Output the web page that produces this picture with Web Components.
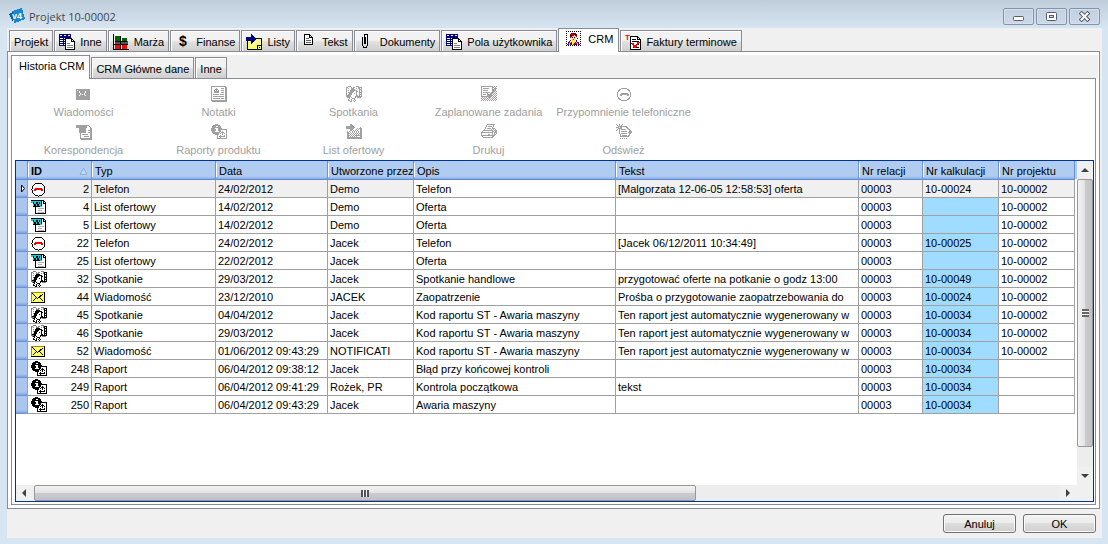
<!DOCTYPE html>
<html lang="pl">
<head>
<meta charset="utf-8">
<title>Projekt 10-00002</title>
<style>
  html, body { margin: 0; height: 100%; }
  body { font: 11px/14px "Liberation Sans", Arial, sans-serif; color: #000; background: #d7e4f2; }
</style>
</head>
<body>
<project-window></project-window>

<script>
/* ---------- icons ---------- */
const COLORS = { k: '#000', g: '#808080', l: '#c0c0c0', w: '#fff', y: '#ffff00', c: '#00d8e8', n: '#000080', r: '#ff0000', m: '#800020', p: '#f8a8d8', s: '#fcd0a0', v: '#700070', a: '#a0a0a0' };

/* turns rows of colour letters into runs of one-pixel-high rectangles */
function pixels(rows, colors = COLORS) {
  let out = '';
  rows.forEach((row, y) => {
    for (let x = 0; x < row.length;) {
      let end = x;
      while (end < row.length && row[end] === row[x]) end++;
      if (colors[row[x]]) out += `<rect x="${x}" y="${y}" width="${end - x}" height="1" fill="${colors[row[x]]}"/>`;
      x = end;
    }
  });
  return out;
}

const FACE = [
  '..ggg.....ggg...',
  'ggwwwg.ggwwwgkkk',
  'gwgwwgggwwgwgkwk',
  'gwwwwkkkkwwwwkkk',
  'gwgwkkkkkkkwwkwk',
  'gwwwkkkkwwkkwkck',
  'gwgkkkkwwwkwwkkk',
  'gwwkkkwwkwkwwkwk',
  'gwgkkkwwwwkwwkkk',
  'gkkkkwwwwwkkwkyk',
  'gggkkwwwwkkkkkkk',
  '.gkkwkwwwkwgggg.',
  '...kwwkkkww.....',
  '..k..kwwk.......',
  '..kk.kwk.k......',
  '....kk..k.......'];
const REPORT = [
  '....kkk.........',
  '..kkkkkkk.......',
  '.kkkkwwkkk......',
  '.kkkkkkkkk......',
  'kkkkwwwkkkk.....',
  'kkkkkwwkkkkkkkkk',
  'kkkkkwwkkkwwwwwk',
  '.kkkwwwwkkwkwwwk',
  '.kkkkkkkkwkkkwwk',
  '..kkkkkkwkwkwkwk',
  '....kkkkwwwkwwwk',
  '......kwwkwwwkwk',
  '......kwkkkkkkwk',
  '......kwwkwwwwwk',
  '......kkkkkkkkkk',
  '................'];
const NOTES = [
  'kkkkkkkkkkkkkkk.',
  'kwwwwwwwwwwwwwkk',
  'kwwwwkwwwwkkkwkk',
  'kwwwkkkwwwwwwwkk',
  'kwwkwkwkwwkkkwkk',
  'kwwkkkkkwwwwwwkk',
  'kwwkkkkkwwkkkwkk',
  'kwwwwwwwwwwwwwkk',
  'kwkkkkkkwkkkkwkk',
  'kwwwwwwwwwwwwwkk',
  'kwkkkkkkkkkkkwkk',
  'kwwwwwwwwwwwwwkk',
  'kwkkkkkkkwkkkwkk',
  'kwwwwwwwwwwwwwkk',
  'kkkkkkkkkkkkkkkk',
  '.kkkkkkkkkkkkkkk'];
const TASKS = [
  'kkkkkkkkkkkk.k.k',
  'kwwwwwwwwwwkk.k.',
  'kwkkkkkkwwwk.kkk',
  'kwwwwwwwwwwkkkk.',
  'kwkkkkkwwwwkkkk.',
  'kwwwwwwwwwwkkk.k',
  'kwkkkkkkkwkkk.k.',
  'kwwwwwkwwkkk.k.k',
  'kwkkkwkkkkk.k.k.',
  'kwwwwwkkkkkk.k.k',
  'kkkkkkkkkkk.k.k.',
  '.k.k.k.kkk.k.k.k',
  'k.k.k.k.k.k.k.k.',
  '.k.k.k.k.k.k.k.k',
  'k.k.k.k.k.k.k.k.'];
const PRINTER = [
  '......kkkkkkkk..',
  '.....kwwwwwwk...',
  '.....kwkkkkwk...',
  '....kwwwwwwk....',
  '....kwkkkkwkkk..',
  '...kwwwwwwk.k.k.',
  '..kkkkkkkkkk.kkk',
  '.kwwwwwwwwwkk.kk',
  'kkkkkkkkkkkkwkkk',
  'kwwwwwwwwwwkwk.k',
  'kwwwwwwkkwwkwkk.',
  'kkkkkkkkkkkkkk..',
  '.kwwwwwwwwwkk...',
  '..kkkkkkkkkk....'];
const REFRESH = [
  'k..k..k.........',
  '.k.k.k..........',
  '..kkkkkkkkk.....',
  'kkkwkkwwwwkk....',
  '..kkkkwwwwwkk...',
  '.k.k.kkkkkwwkk..',
  'k..kwwwwwwwwwkk.',
  '...kwkkkkkkwwkkk',
  '...kwwwwwwwwkkkk',
  '...kwkkkkkkwwkk.',
  '....kwwwwwwwwk..',
  '....kwkkkkkwkk..',
  '....kkkkkkkkk...',
  '................',
  '....k.k.k.k.....'];
const LETTER_IN = [
  '....kk..........',
  '....kkk.........',
  'kkkkkkkk........',
  'kkkkkkkkk.....k.',
  'kkkkkkkk...k.kkk',
  '....kkk...k.k.kk',
  '....kk.k.k.kwwkk',
  '.k.k..k.k.k.k.kk',
  '.kk.k.k.k.k.k.kk',
  '.kkk.k.k.k.k.kkk',
  '.kk.k.k.k.k.k.kk',
  '.kkk.k.k.kkkkkkk',
  '.kk.k.k.k.kwwwkk',
  '.kkkkkkkkkkkkkkk',
  '.kkkkkkkkkkkkkkk'];
const PERSON = [
  'k.k.k.k.k.k.k.k',
  '...............',
  'k....mmmmm....k',
  '....mmrmmmm....',
  'k...mmmmsmm...k',
  '....mkssssm....',
  'k...mskskss...k',
  '.....sssss.k...',
  'k....ssrss....k',
  '....m.sss.k....',
  'k..v..yyy.v...k',
  '..vvpvysyvpvv..',
  'k.vpvvyyvvvpv.k',
  '.vvpvvyvvvvpvv.',
  'k.k.k.k.k.k.k.k'];
const GREY = { k: '#a0a0a0', w: '#fff' };

const sheet = (x, y, w, h) =>
  `<path d="M${x + .5} ${y + .5}h${w - 4}l3 3v${h - 4}h-${w - 1}z" fill="#fff" stroke="#000"/><path d="M${x + w - 3.5} ${y + .5}v3h3" fill="none" stroke="#000"/>`;

const ICONS = {
  logo: `<path d="M3 3L13 0L16 11L5 15.500z" fill="#1787cf"/><path d="M0 6L4 4V14z" fill="#0a5ca0"/><text x="3" y="11" font-size="9" font-weight="bold" fill="#fff" font-family="Liberation Sans">v4</text>`,
  table: `<path d="M0 0h12v3h-12z" fill="#000080"/><path d="M1 1h2v1h-2zM5 1h2v1h-2zM9 1h2v1h-2z" fill="#fff"/><path d="M0 3h12v9h-12z" fill="#000080"/><path d="M1 4h3v1h-3zM5 4h3v1h-3zM9 4h2v1h-2zM1 6h3v1h-3zM5 6h3v1h-3zM1 8h3v1h-3zM1 10h3v1h-3zM5 8h1v1h-1zM5 10h1v1h-1z" fill="#fff"/>` + sheet(6, 4, 10, 12) + `<path d="M8 9h3v1h-3zM8 11h6v1h-6zM8 13h6v1h-6z" fill="#808080"/>`,
  bars: `<path d="M0 0h1v15h15v1h-16z"/><path d="M2 2h5v5h-5zM9 4h5v3h-5z" fill="#006400"/><path d="M2 7h13v4h-13z" fill="#555"/><path d="M2 7h12v1h-12zM7 2h1v13h-1zM1 10h14v1h-14z"/><path d="M2 11h5v4h-5zM9 11h5v4h-5z" fill="#f00"/>`,
  dollar: `<text x="4" y="12" font-size="14" font-weight="bold" font-family="Liberation Sans">$</text>`,
  note: `<path d="M2 5h13v10h-13z" fill="#ffff60"/><path d="M4 13L13 6" stroke="#fff"/><path d="M1 7h1v9h-1zM1 15h15v1h-15zM15 4h1v12h-1zM8 4h8v1h-8z"/><path d="M11 11h4v1h-4zM11 11h1v4h-1zM13 13h1v1h-1z"/><path d="M0 3h5v-3l5 5l-5 5v-3h-5z" fill="#000080"/>`,
  page: sheet(3, 0, 9, 11) + `<path d="M5 4h3v1h-3zM5 6h5v1h-5zM5 8h5v1h-5z" fill="#606060"/>`,
  clip: `<path d="M3.500 3v8l1 2h3l1-2v-10l-1-1h-1l-1 1v9M6.500 10v-7" fill="none" stroke="#000"/>`,
  person: pixels(PERSON),
  terms: sheet(5, 2, 11, 14) + `<path d="M7 5h4v1h-4zM7 7h7v1h-7zM7 9h2v1h-2zM12 10h2v1h-2zM8 13h6v1h-6z"/><path d="M7 9l3 4l4-5" fill="none" stroke="#f00" stroke-width="2"/><text x="0" y="6" font-size="8" font-weight="bold" fill="#f00" font-family="Liberation Sans">T</text>`,
  phone: `<circle cx="7.500" cy="8.500" r="6.500" fill="#fff" stroke="#000"/><path d="M3 10v-2h1v-1h7v1h1v2h-2v-1h-5v1z" fill="#f00"/>`,
  word: `<path d="M4.500 1.500h8l2 2v11h-10z" fill="#fff" stroke="#000"/><path d="M12 1v3h3" fill="none" stroke="#000"/><path d="M7 9h6v1h-6zM7 11h4v1h-4zM7 13h6v1h-6z" fill="#b0b0b0"/><path d="M0 1h11v7h-9v-4h-2z" fill="#00d8e0"/><path d="M0 1h11v1h-11zM10 1h1v6h-1zM2 7h7v1h-7z"/><path d="M2 3l2 4l2-4l1 4l2-4" fill="none" stroke="#000"/>`,
  mail: `<path d="M0 3h14v11h-14z"/><path d="M0 3h13v10h-13z" fill="#a08c00"/><path d="M1 4h12v9h-12z" fill="#ffff66"/><path d="M1.500 4.500l5 5l6-5M1.500 12.500l4-4M12.500 12.500l-4-4" fill="none" stroke="#000"/>`,
  face: pixels(FACE),
  report: pixels(REPORT),
  'g-mail': `<path d="M0 3h14v11h-14z" fill="#a0a0a0"/><path d="M1.500 4.500l5 4l5-4M1.500 11.500l3-3M11.500 11.500l-3-3" fill="none" stroke="#fff" stroke-dasharray="1 1"/>`,
  'g-notes': pixels(NOTES, GREY),
  'g-face': pixels(FACE, { k: '#a0a0a0', g: '#a0a0a0', w: '#fff', y: '#fff', c: '#fff' }),
  'g-tasks': pixels(TASKS, GREY),
  'g-phone': `<circle cx="8" cy="8.500" r="6.500" fill="#fff" stroke="#a0a0a0"/><path d="M4 10v-2h1v-1h7v1h1v2h-2v-1h-5v1z" fill="#a0a0a0"/>`,
  'g-word': `<path d="M4.500 1.500h8l2 2v11h-10z" fill="#fff" stroke="#a0a0a0"/><path d="M12 1v3h4v12h-11v-1h9v-11h-2zM0 1h11v3h-1v5h-7v-5h-3zM6 10h6v1h-6zM8 12h5v1h-5zM12 6h2v1h-2zM12 8h2v1h-2z" fill="#a0a0a0"/>`,
  'g-report': pixels(REPORT, GREY),
  'g-letter': pixels(LETTER_IN, GREY),
  'g-printer': pixels(PRINTER, GREY),
  'g-refresh': pixels(REFRESH, GREY)
};

const define = (name, html, setup) => {
  const template = document.createElement('template');
  template.innerHTML = html;
  customElements.define(name, class extends HTMLElement {
    constructor() {
      super();
      this.attachShadow({ mode: 'open' }).append(template.content.cloneNode(true));
    }
    connectedCallback() { if (setup) setup(this, this.shadowRoot); }
  });
};

define('ui-icon', `<style>:host { display: block; flex: none; width: 16px; height: 16px } svg { display: block; overflow: visible }</style><svg width="16" height="16" viewBox="0 0 16 16" shape-rendering="crispEdges" aria-hidden="true"></svg>`,
  (el, root) => { root.querySelector('svg').innerHTML = ICONS[el.getAttribute('name')]; });

/* ---------- title bar ---------- */
define('title-bar', `
<style>
  :host { display: flex; align-items: center; height: 28px; padding: 0 8px 0 9px; background: linear-gradient(#bfccd9, #d7e4f2); }
  h1 { flex: 1; margin: 0; padding: 6px 4px 0; font: 11px/16px "Open Sans", "Noto Sans", sans-serif; color: #404850; }
  ui-icon { margin-top: 4px; }
  .controls { display: flex; gap: 2px; padding-top: 4px; }
  button { display: flex; align-items: center; justify-content: center; width: 31px; height: 17px; padding: 0; background: linear-gradient(#c3d0df, #cbd9e8); border: 1px solid #8393b0; border-radius: 2px; box-shadow: inset 0 0 0 1px #d5e0ec; }
</style>
<ui-icon name="logo"></ui-icon>
<h1><slot></slot></h1>
<div class="controls">
  <button aria-label="Minimalizuj"><svg width="12" height="12"><rect x="0.500" y="6.500" width="10" height="4" rx="1" fill="#fff" stroke="#565c68"/></svg></button>
  <button aria-label="Maksymalizuj"><svg width="12" height="12"><rect x="0.500" y="2.500" width="10" height="8" rx="1" fill="#fff" stroke="#565c68"/><rect x="3.500" y="5.500" width="4" height="2" fill="#ccd8e6" stroke="#565c68"/></svg></button>
  <button aria-label="Zamknij"><svg width="12" height="12"><path d="M2.500 3.500L8.500 9.500M8.500 3.500L2.500 9.500" stroke="#565c68" stroke-width="4" stroke-linecap="square"/><path d="M2.500 3.500L8.500 9.500M8.500 3.500L2.500 9.500" stroke="#fff" stroke-width="2" stroke-linecap="square"/></svg></button>
</div>`);

/* ---------- tabs ---------- */
define('tab-strip', `<style>:host { display: flex; align-items: flex-end; gap: 1px; padding-left: 2px; position: relative } :host([level="2"]) { padding-left: 3px; margin-top: 3px; background: #f0f0f0; }</style><slot></slot>`,
  (el) => el.setAttribute('role', 'tablist'));

define('tab-item', `
<style>
  :host { display: block; }
  button { display: flex; align-items: center; gap: 5px; height: 21px; padding: 2px 4px 0; font: inherit; color: inherit; white-space: nowrap; background: linear-gradient(#f2f2f2 0 45%, #e0e0e0 55%, #cfcfcf); border: 1px solid #898c95; border-bottom: 0; box-shadow: inset 1px 1px #fff; }
  button.on { height: 24px; margin-bottom: -1px; padding: 0 5px 3px 7px; gap: 6px; background: #fff; position: relative; }
</style>
<button role="tab"><slot name="icon"></slot><span><slot></slot></span></button>`,
  (el, root) => {
    const on = el.hasAttribute('selected');
    const button = root.querySelector('button');
    button.classList.toggle('on', on);
    button.setAttribute('aria-selected', on);
  });

/* ---------- tool bar ---------- */
define('tool-bar', `<style>:host { display: grid; grid-template-columns: repeat(5, 135px); padding: 5px 0 0 4px; height: 76px; align-content: start; box-sizing: content-box; height: 76px; }</style><slot></slot>`);
define('tool-button', `
<style>
  button { display: flex; flex-direction: column; align-items: center; gap: 3px; width: 100%; height: 38px; padding: 2px 0 0; border: 0; background: none; font: inherit; color: #a0a0a0; white-space: nowrap; }
  :host { display: block; }
</style>
<button disabled><ui-icon></ui-icon><span><slot></slot></span></button>`,
  (el, root) => {
    const icon = document.createElement('ui-icon');
    icon.setAttribute('name', el.getAttribute('icon'));
    root.querySelector('ui-icon').replaceWith(icon);
  });

/* ---------- scroll bar ---------- */
define('scroll-bar', `
<style>
  :host { display: flex; background: #ededed; }
  :host([vertical]) { flex-direction: column; width: 16px; }
  :host(:not([vertical])) { height: 16px; }
  button { flex: none; width: 18px; height: 16px; padding: 0; border: 0; background: #f0f0f0; display: flex; align-items: center; justify-content: center; }
  :host([vertical]) button { width: 16px; height: 18px; }
  .track { flex: 1; display: flex; }
  :host([vertical]) .track { flex-direction: column; }
  .thumb { flex: none; width: 64.6%; display: flex; align-items: center; justify-content: center; box-sizing: border-box; border: 1px solid #979797; border-radius: 2px; background: linear-gradient(#f4f4f4, #e2e2e4 50%, #cccdd1 50%, #c0c0c6); }
  :host([vertical]) .thumb { width: auto; height: 93%; background: linear-gradient(90deg, #f4f4f4, #e2e2e4 50%, #cccdd1 50%, #c0c0c6); }
  .grip { width: 8px; height: 7px; background: repeating-linear-gradient(90deg, #555 0 2px, #f4f4f4 2px 3px); }
  :host([vertical]) .grip { width: 7px; height: 8px; background: repeating-linear-gradient(#666 0 2px, #f4f4f4 2px 3px); }
</style>
<button class="back"></button><div class="track"><div class="thumb"><div class="grip"></div></div></div><button class="next"></button>`,
  (el, root) => {
    const vertical = el.hasAttribute('vertical');
    const arrow = d => `<svg width="8" height="8"><path d="${d}" fill="#404040"/></svg>`;
    const [back, next] = root.querySelectorAll('button');
    back.setAttribute('aria-label', vertical ? 'W górę' : 'W lewo');
    next.setAttribute('aria-label', vertical ? 'W dół' : 'W prawo');
    back.innerHTML = arrow(vertical ? 'M0 6L4 2L8 6z' : 'M5 0L1 4L5 8z');
    next.innerHTML = arrow(vertical ? 'M0 2L4 6L8 2z' : 'M2 0L6 4L2 8z');
  });

/* ---------- data grid ---------- */
const ROWS = [
  ['phone', '2', 'Telefon', '24/02/2012', 'Demo', 'Telefon', '[Malgorzata 12-06-05 12:58:53] oferta', '00003', '10-00024', '10-00002'],
  ['word', '4', 'List ofertowy', '14/02/2012', 'Demo', 'Oferta', '', '00003', '', '10-00002'],
  ['word', '5', 'List ofertowy', '14/02/2012', 'Demo', 'Oferta', '', '00003', '', '10-00002'],
  ['phone', '22', 'Telefon', '24/02/2012', 'Jacek', 'Telefon', '[Jacek 06/12/2011 10:34:49]', '00003', '10-00025', '10-00002'],
  ['word', '25', 'List ofertowy', '22/02/2012', 'Jacek', 'Oferta', '', '00003', '', '10-00002'],
  ['face', '32', 'Spotkanie', '29/03/2012', 'Jacek', 'Spotkanie handlowe', 'przygotować oferte na potkanie o godz 13:00', '00003', '10-00049', '10-00002'],
  ['mail', '44', 'Wiadomość', '23/12/2010', 'JACEK', 'Zaopatrzenie', 'Prośba o przygotowanie zaopatrzebowania do', '00003', '10-00024', '10-00002'],
  ['face', '45', 'Spotkanie', '04/04/2012', 'Jacek', 'Kod raportu ST - Awaria maszyny', 'Ten raport jest automatycznie wygenerowany w', '00003', '10-00034', '10-00002'],
  ['face', '46', 'Spotkanie', '29/03/2012', 'Jacek', 'Kod raportu ST - Awaria maszyny', 'Ten raport jest automatycznie wygenerowany w', '00003', '10-00034', '10-00002'],
  ['mail', '52', 'Wiadomość', '01/06/2012 09:43:29', 'NOTIFICATI', 'Kod raportu ST - Awaria maszyny', 'Ten raport jest automatycznie wygenerowany w', '00003', '10-00034', '10-00002'],
  ['report', '248', 'Raport', '06/04/2012 09:38:12', 'Jacek', 'Błąd przy końcowej kontroli', '', '00003', '10-00034', ''],
  ['report', '249', 'Raport', '06/04/2012 09:41:29', 'Rożek, PR', 'Kontrola początkowa', 'tekst', '00003', '10-00034', ''],
  ['report', '250', 'Raport', '06/04/2012 09:43:29', 'Jacek', 'Awaria maszyny', '', '00003', '10-00034', '']
];

define('history-grid', `
<style>
  :host { display: flex; flex-direction: column; border: 1px solid #003399; background: #fff; }
  .main { flex: 1; display: flex; }
  .sheet { flex: 1; padding-right: 2px; background: linear-gradient(#b0ccf0, #adc9ef) 0 0 / 100% 18px no-repeat; }
  table { width: 100%; table-layout: fixed; border-collapse: separate; border-spacing: 0; }
  th, td { box-sizing: border-box; height: 18px; padding: 1px 2px 0; line-height: 14px; text-align: left; white-space: nowrap; overflow: hidden; border-right: 1px solid #a0a0a0; border-bottom: 1px solid #a0a0a0; }
  th { height: 19px; padding: 2px 0 0 3px; font-weight: normal; border-right: 1px solid #6b93d6; border-bottom: 1px solid #5f8ad6; background: linear-gradient(#fff, #fff) 0 2px / 1px 14px no-repeat, linear-gradient(#b0ccf0 0 15px, #9dbcec 17px, #7ba2e2); }
  th:first-child { background: linear-gradient(#b0ccf0 0 15px, #7ba2e2); }
  th.id { padding-right: 3px; font-weight: bold; }
  .split { display: flex; align-items: center; justify-content: space-between; }
  td.id { padding: 0 2px 0 3px; }
  td.id .split { height: 17px; }
  .mark { padding: 0 0 0 4px; background: linear-gradient(#aac6ee 0 14px, #7ba2e2); border-bottom-color: #6b93d6; }
  .mark svg { display: block; }
  tr.current td:not(.mark) { background: #f0f0f0; }
  tr.current td.focus { background: #fff; }
  .calc { background: #a0dcff; }
  .foot { display: flex; }
  .foot scroll-bar { flex: 1; }
  .corner { width: 16px; background: #f0f0f0; }
</style>
<div class="main">
  <div class="sheet">
    <table>
      <colgroup><col style="width:12px"><col style="width:64px"><col style="width:124px"><col style="width:112px"><col style="width:86px"><col style="width:202px"><col><col style="width:64px"><col style="width:76px"><col style="width:76px"></colgroup>
      <thead><tr><th></th><th class="id"><span class="split">ID<svg width="9" height="9" aria-hidden="true"><path d="M1 7.500L4.500 1L8 7.500z" fill="#c4d8f6" stroke="#88aee4"/></svg></span></th><th>Typ</th><th>Data</th><th>Utworzone przez</th><th>Opis</th><th>Tekst</th><th>Nr relacji</th><th>Nr kalkulacji</th><th>Nr projektu</th></tr></thead>
      <tbody></tbody>
    </table>
  </div>
  <scroll-bar vertical></scroll-bar>
</div>
<div class="foot"><scroll-bar></scroll-bar><div class="corner"></div></div>`,
  (el, root) => {
    root.querySelector('tbody').innerHTML = ROWS.map(([icon, id, ...cells], i) => {
      const mark = i ? '' : '<svg width="6" height="9"><path d="M1.500 1L4.500 4.500L1.500 8z" fill="#fff" stroke="#000"/></svg>';
      const rest = cells.map((text, n) => `<td class="${n === 3 ? 'focus' : n === 6 ? 'calc' : ''}">${text}</td>`).join('');
      return `<tr class="${i ? '' : 'current'}"><td class="mark">${mark}</td><td class="id"><span class="split"><ui-icon name="${icon}"></ui-icon>${id}</span></td>${rest}</tr>`;
    }).join('');
  });

define('push-button', `
<style>
  :host { display: block; }
  button { width: 73px; height: 19px; padding: 0; font: inherit; color: inherit; border: 1px solid #707070; border-radius: 3px; background: linear-gradient(#f3f3f3, #ebebeb 50%, #dddddd 50%, #cfcfcf); box-shadow: inset 0 0 0 1px #fafafa; display: flex; align-items: center; justify-content: center; }
</style>
<button><slot></slot></button>`);

/* ---------- window ---------- */
define('project-window', `
<style>
  :host { display: flex; flex-direction: column; min-height: 100vh; box-sizing: border-box; padding: 0 6px 6px 7px; background: #d7e4f2; }
  title-bar { margin: 0 -6px 0 -7px; }
  main { flex: 1; display: flex; flex-direction: column; background: #f0f0f0; }
  main > tab-strip { height: 23px; }
  .page { flex: 1; display: flex; flex-direction: column; margin-right: 2px; border: 1px solid #898c95; background: #fff; }
  .page > tab-strip { height: 23px; margin-right: 1px; }
  .panel { flex: 1; display: flex; flex-direction: column; margin: 0 3px 3px; border: 1px solid #898c95; }
  history-grid { flex: 1; margin: 0 1px 2px 3px; }
  footer { display: flex; justify-content: flex-end; gap: 7px; padding: 5px 6px 5px; }
</style>
<title-bar>Projekt 10-00002</title-bar>
<main>
  <tab-strip>
    <tab-item>Projekt</tab-item>
    <tab-item><ui-icon slot="icon" name="table"></ui-icon>Inne</tab-item>
    <tab-item><ui-icon slot="icon" name="bars"></ui-icon>Marża</tab-item>
    <tab-item><ui-icon slot="icon" name="dollar"></ui-icon>Finanse</tab-item>
    <tab-item><ui-icon slot="icon" name="note"></ui-icon>Listy</tab-item>
    <tab-item><ui-icon slot="icon" name="page"></ui-icon>Tekst</tab-item>
    <tab-item><ui-icon slot="icon" name="clip"></ui-icon>Dokumenty</tab-item>
    <tab-item><ui-icon slot="icon" name="table"></ui-icon>Pola użytkownika</tab-item>
    <tab-item selected><ui-icon slot="icon" name="person"></ui-icon>CRM</tab-item>
    <tab-item><ui-icon slot="icon" name="terms"></ui-icon>Faktury terminowe</tab-item>
  </tab-strip>
  <div class="page">
    <tab-strip level="2">
      <tab-item selected>Historia CRM</tab-item>
      <tab-item>CRM Główne dane</tab-item>
      <tab-item>Inne</tab-item>
    </tab-strip>
    <div class="panel">
      <tool-bar>
        <tool-button icon="g-mail">Wiadomości</tool-button>
        <tool-button icon="g-notes">Notatki</tool-button>
        <tool-button icon="g-face">Spotkania</tool-button>
        <tool-button icon="g-tasks">Zaplanowane zadania</tool-button>
        <tool-button icon="g-phone">Przypomnienie telefoniczne</tool-button>
        <tool-button icon="g-word">Korespondencja</tool-button>
        <tool-button icon="g-report">Raporty produktu</tool-button>
        <tool-button icon="g-letter">List ofertowy</tool-button>
        <tool-button icon="g-printer">Drukuj</tool-button>
        <tool-button icon="g-refresh">Odśwież</tool-button>
      </tool-bar>
      <history-grid></history-grid>
    </div>
  </div>
  <footer>
    <push-button>Anuluj</push-button>
    <push-button>OK</push-button>
  </footer>
</main>`);
</script>
</body>
</html>
